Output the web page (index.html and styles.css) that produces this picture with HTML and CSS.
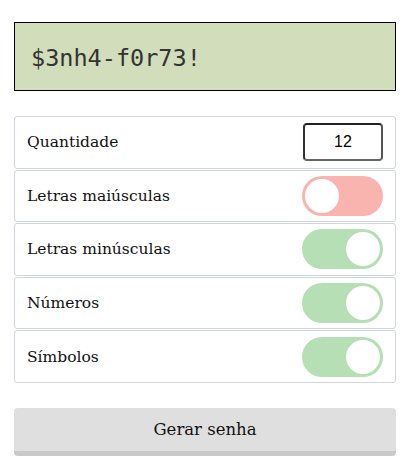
FILE: index.html
```html
<!DOCTYPE html>
<html lang="pt">
<head>
<meta charset="utf-8">
<link rel="stylesheet" href="styles.css">
</head>
<body>
<main class="app">
  <div class="password">$3nh4-f0r73!</div>
  <div class="options">
    <div class="row">
      <span class="label">Quantidade</span>
      <input class="qty" type="text" value="12">
    </div>
    <div class="row">
      <span class="label">Letras maiúsculas</span>
      <span class="toggle off"><span class="knob"></span></span>
    </div>
    <div class="row">
      <span class="label">Letras minúsculas</span>
      <span class="toggle on"><span class="knob"></span></span>
    </div>
    <div class="row">
      <span class="label">Números</span>
      <span class="toggle on"><span class="knob"></span></span>
    </div>
    <div class="row">
      <span class="label">Símbolos</span>
      <span class="toggle on"><span class="knob"></span></span>
    </div>
  </div>
  <button class="generate">Gerar senha</button>
</main>
</body>
</html>
```

FILE: styles.css
```css
* { box-sizing: border-box; }
html, body { margin: 0; background: #fff; }
body {
  font-family: "DejaVu Serif", serif;
  color: #111;
}
.app {
  padding: 22px 13px 0 14px;
  display: flex;
  flex-direction: column;
}
.password {
  height: 69px;
  border: 1px solid #000;
  background: #d2ddbb;
  font-family: "DejaVu Sans Mono", monospace;
  font-size: 23.5px;
  color: #333;
  display: flex;
  align-items: center;
  padding-left: 16px;
  padding-top: 2px;
}
.options {
  margin-top: 25px;
  display: flex;
  flex-direction: column;
  gap: 1px;
}
.row {
  height: 52.6px;
  border: 1px solid #d2d6de;
  border-radius: 3px;
  display: flex;
  align-items: center;
  justify-content: space-between;
  padding: 0 12px 0 12px;
}
.label {
  font-size: 15.5px;
}
.qty {
  width: 80px;
  height: 38px;
  border: 2px solid;
  border-color: #222 #555 #666 #333;
  border-radius: 4px;
  text-align: center;
  font-family: "Liberation Sans", Arial, sans-serif;
  font-size: 16px;
  color: #000;
  padding: 0;
}
.toggle {
  width: 81px;
  height: 40px;
  border-radius: 20px;
  padding: 3px;
  display: flex;
}
.toggle .knob {
  width: 34px;
  height: 34px;
  border-radius: 50%;
  background: #fff;
}
.toggle.off { background: #f9b4b0; justify-content: flex-start; }
.toggle.on { background: #b6dfb5; justify-content: flex-end; }
.generate {
  margin-top: 25px;
  height: 48px;
  border: none;
  border-bottom: 5px solid #c9c9c9;
  border-radius: 4px;
  background: #dfdfdf;
  font-family: "DejaVu Serif", serif;
  font-size: 16.5px;
  color: #111;
  padding: 1px 0 0;
}
```
